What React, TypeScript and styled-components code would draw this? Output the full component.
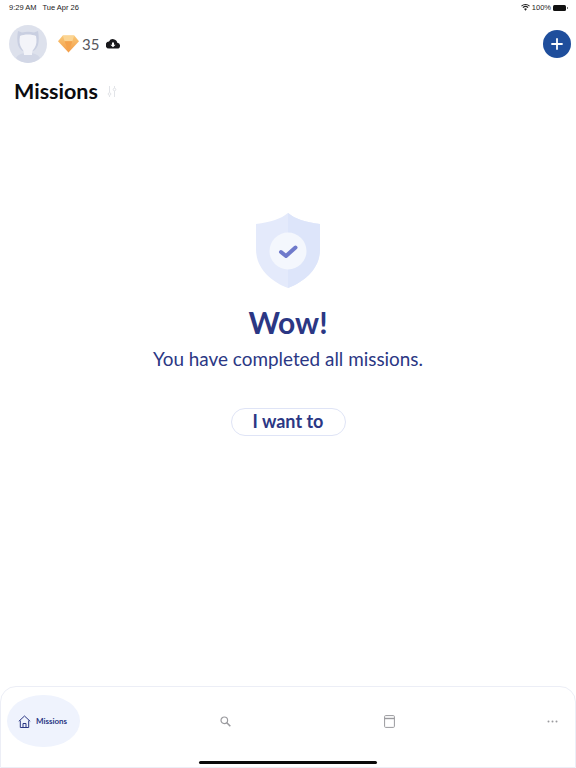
import styled, { createGlobalStyle } from 'styled-components';

const GlobalStyle = createGlobalStyle`
  html, body {
    margin: 0;
    padding: 0;
    background: #ffffff;
  }
  * {
    box-sizing: border-box;
  }
`;

const Page = styled.div`
  position: relative;
  width: 576px;
  height: 768px;
  display: flex;
  flex-direction: column;
  overflow: hidden;
  background: #ffffff;
  font-family: Lato, "Liberation Sans", sans-serif;
`;

const StatusBar = styled.div`
  height: 13px;
  padding: 2px 8px 0 9px;
  display: flex;
  justify-content: space-between;
  align-items: center;
  font-family: "Liberation Sans", sans-serif;
  font-size: 7.5px;
  line-height: 9px;
  color: #222222;
`;

const StatusGroup = styled.div`
  display: flex;
  align-items: center;
  gap: 6px;
`;

const BatteryGroup = styled(StatusGroup)`
  gap: 2px;
`;

const Battery = styled.div`
  position: relative;
  width: 13px;
  height: 6px;
  border-radius: 1.5px;
  background: #111111;
  margin-right: 2px;

  &::after {
    content: '';
    position: absolute;
    right: -2px;
    top: 2px;
    width: 1px;
    height: 2px;
    background: #777777;
  }
`;

const TopBar = styled.div`
  height: 38px;
  margin-top: 12px;
  padding: 0 5px 0 9px;
  display: flex;
  align-items: center;
`;

const Avatar = styled.div`
  width: 38px;
  height: 38px;
  border-radius: 50%;
  background: #dde1ec;
  overflow: hidden;
`;

const Score = styled.span`
  margin-left: 3px;
  font-size: 15px;
  font-weight: 400;
  color: #55565c;
`;

const GemSlot = styled.div`
  margin-left: 11px;
  display: flex;
`;

const CloudSlot = styled.div`
  margin-left: 7px;
  display: flex;
`;

const AddButton = styled.div`
  margin-left: auto;
  width: 28px;
  height: 28px;
  border-radius: 50%;
  background: #1f4e9c;
  display: flex;
  align-items: center;
  justify-content: center;
`;

const TitleRow = styled.div`
  margin-top: 14px;
  padding-left: 14px;
  display: flex;
  align-items: center;
  gap: 9px;
`;

const Title = styled.h1`
  margin: 0;
  font-size: 21.5px;
  line-height: 28px;
  font-weight: 700;
  color: #0b0b0f;
`;

const Content = styled.main`
  flex: 1;
  padding-top: 108px;
  display: flex;
  flex-direction: column;
  align-items: center;
`;

const Heading = styled.h2`
  margin: 14px 0 0;
  font-size: 30px;
  line-height: 38px;
  font-weight: 700;
  color: #2b3784;
`;

const Message = styled.p`
  margin: 5px 0 0;
  font-size: 18.9px;
  line-height: 26px;
  font-weight: 400;
  color: #2b3784;
`;

const WantButton = styled.button`
  margin-top: 36px;
  width: 115px;
  height: 28px;
  padding: 0 0 2px;
  border: 1px solid #dfe4f6;
  border-radius: 14px;
  background: #ffffff;
  font-family: inherit;
  font-size: 18px;
  font-weight: 700;
  color: #2b3784;
`;

const TabBar = styled.nav`
  height: 82px;
  padding: 8px 4px 0 6px;
  border: 1px solid #eceef6;
  border-radius: 16px 16px 0 0;
  display: flex;
  justify-content: space-between;
  align-items: flex-start;
`;

const Tab = styled.div`
  width: 36px;
  height: 52px;
  display: flex;
  align-items: center;
  justify-content: center;
`;

const ActiveTab = styled(Tab)`
  width: 73px;
  padding-right: 2px;
  gap: 5px;
  background: #eff3fd;
  border-radius: 36px / 26px;
  font-size: 8px;
  font-weight: 700;
  color: #2b3784;
`;

const HomeIndicator = styled.div`
  position: absolute;
  left: 199px;
  bottom: 4px;
  width: 178px;
  height: 3px;
  border-radius: 2px;
  background: #0a0a0a;
`;

const Wifi = () => (
  <svg width="9" height="7" viewBox="0 0 10 8">
    <path d="M5 7.6 3.4 5.7a2.4 2.4 0 0 1 3.2 0ZM2.500 4.700 1.600 3.700a5 5 0 0 1 6.800 0l-.9 1a3.700 3.700 0 0 0-5 0ZM.8 2.900 0 2a7.300 7.300 0 0 1 10 0l-.8.9a6.100 6.100 0 0 0-8.400 0Z" fill="#222" />
  </svg>
);

const AvatarArt = () => (
  <svg width="38" height="38" viewBox="0 0 38 38">
    <path d="M7 33c2-4 7-5 12-5s10 1 12 5c-3 3-7 5-12 5s-9-2-12-5Z" fill="#d2d7e6" />
    <path d="M9 6l4 1.500c4-1 8-1 12 0L29 6c1 5 1 10 0 14-2 5-5 7-10 7s-8-2-10-7c-1-4-1-9 0-14Z" fill="#c9cfe1" />
    <path d="M11 11c4-2 12-2 16 0 1 5 .5 9-1.500 12-1.500 2-2.500 3-2.500 7h-8c0-4-1-5-2.500-7C10.500 20 10 16 11 11Z" fill="#f3f4f9" />
  </svg>
);

const Gem = () => (
  <svg width="21" height="18" viewBox="0 0 22 18">
    <defs>
      <linearGradient id="gemFill" x1="0" y1="0" x2="0" y2="1">
        <stop offset="0" stopColor="#f9c877" />
        <stop offset="1" stopColor="#f39a45" />
      </linearGradient>
    </defs>
    <path d="M5 0h12l5 6-11 12L0 6Z" fill="url(#gemFill)" />
    <path d="M5 0h12l-2 6H7Z" fill="#fbd594" />
    <path d="M7 6h8l-4 12Z" fill="#f4a24c" />
  </svg>
);

const CloudDownload = () => (
  <svg width="14" height="10" viewBox="0 0 14 10">
    <path d="M11.300 3.800A4.400 4.400 0 0 0 3 2.600 3.500 3.500 0 0 0 3.500 9.600h7.400a2.900 2.900 0 0 0 .4-5.800Z" fill="#18181c" />
    <path d="M6 3.500h2v2.200h1.600L7 8.200 4.400 5.700H6Z" fill="#fff" />
  </svg>
);

const Plus = () => (
  <svg width="12" height="12" viewBox="0 0 12 12">
    <path d="M6 1v10M1 6h10" stroke="#fff" strokeWidth="1.800" strokeLinecap="round" />
  </svg>
);

const SortIcon = () => (
  <svg width="10" height="13" viewBox="0 0 10 13" fill="none" stroke="#e2e4e8">
    <path d="M2.500 1v6.500M2.500 10.500V12M7.500 1v2M7.500 6v6" strokeWidth="1" />
    <circle cx="2.500" cy="9" r="1.300" strokeWidth="1" />
    <circle cx="7.500" cy="4.500" r="1.300" strokeWidth="1" />
  </svg>
);

const Shield = () => (
  <svg width="66" height="76" viewBox="0 0 66 76">
    <path d="M33 0c7 6 17 9 32 11v25c0 19-14 32-32 39C15 68 1 55 1 36V11C16 9 26 6 33 0Z" fill="#e4eafb" />
    <path d="M33 0c7 6 17 9 32 11v25c0 19-14 32-32 39Z" fill="#dde5fa" />
    <circle cx="33" cy="38" r="18.500" fill="#f4f7fd" />
    <path d="M26 39l5 4 9.500-8.500" stroke="#6f7acb" strokeWidth="4" strokeLinecap="round" strokeLinejoin="round" fill="none" />
  </svg>
);

const HomeIcon = () => (
  <svg width="13" height="13" viewBox="0 0 13 13" fill="none" stroke="#2b3784" strokeWidth="1">
    <path d="M.8 6.300 6.500 1l5.700 5.300M2.300 5.500v7h8.400v-7M5 12.500V8.500h3v4" strokeLinejoin="round" />
  </svg>
);

const SearchIcon = () => (
  <svg width="11" height="11" viewBox="0 0 11 11" fill="none" stroke="#9a9a9e">
    <circle cx="4.300" cy="4.300" r="3.300" strokeWidth="1.200" />
    <path d="M6.800 6.800 10.300 10.300" strokeWidth="1.600" />
  </svg>
);

const BookIcon = () => (
  <svg width="11" height="13" viewBox="0 0 11 13" fill="none" stroke="#9a9a9e">
    <rect x=".6" y=".6" width="9.800" height="11.800" rx="1" />
    <path d="M.6 3.500h9.800" strokeWidth="1.400" />
  </svg>
);

const DotsIcon = () => (
  <svg width="11" height="3" viewBox="0 0 11 3" fill="#9a9a9e">
    <circle cx="1.500" cy="1.500" r="1" />
    <circle cx="5.500" cy="1.500" r="1" />
    <circle cx="9.500" cy="1.500" r="1" />
  </svg>
);

export default function App() {
  return (
    <Page>
      <GlobalStyle />
      <StatusBar>
        <StatusGroup>
          <span>9:29 AM</span>
          <span>Tue Apr 26</span>
        </StatusGroup>
        <BatteryGroup>
          <Wifi />
          <span>100%</span>
          <Battery />
        </BatteryGroup>
      </StatusBar>
      <TopBar>
        <Avatar>
          <AvatarArt />
        </Avatar>
        <GemSlot>
          <Gem />
        </GemSlot>
        <Score>35</Score>
        <CloudSlot>
          <CloudDownload />
        </CloudSlot>
        <AddButton>
          <Plus />
        </AddButton>
      </TopBar>
      <TitleRow>
        <Title>Missions</Title>
        <SortIcon />
      </TitleRow>
      <Content>
        <Shield />
        <Heading>Wow!</Heading>
        <Message>You have completed all missions.</Message>
        <WantButton>I want to</WantButton>
      </Content>
      <TabBar>
        <ActiveTab>
          <HomeIcon />
          <span>Missions</span>
        </ActiveTab>
        <Tab>
          <SearchIcon />
        </Tab>
        <Tab>
          <BookIcon />
        </Tab>
        <Tab>
          <DotsIcon />
        </Tab>
      </TabBar>
      <HomeIndicator />
    </Page>
  );
}
